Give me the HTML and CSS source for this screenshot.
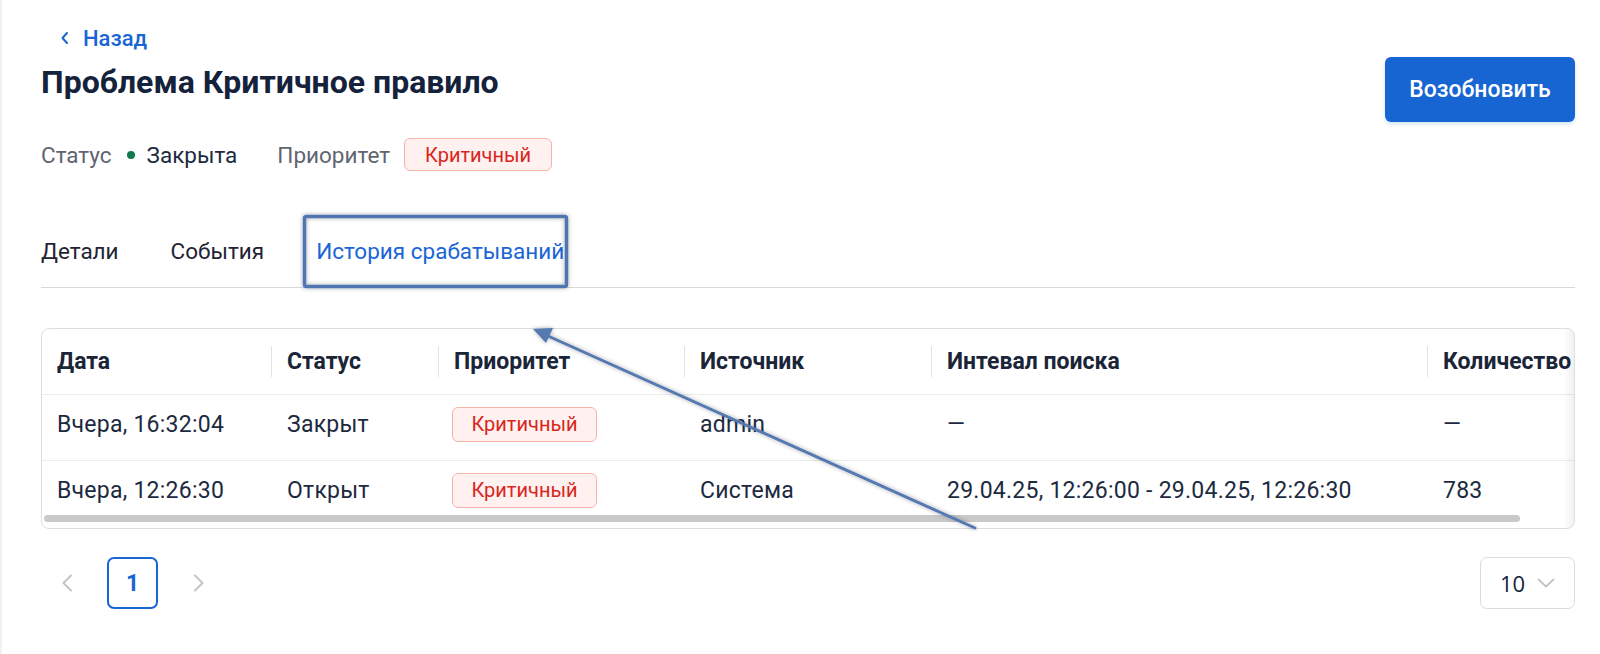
FILE: index.html
```html
<!DOCTYPE html>
<html lang="ru">
<head>
<meta charset="utf-8">
<title>Проблема Критичное правило</title>
<link rel="stylesheet" href="styles.css">
</head>
<body>
<div class="page">
  <header class="head">
    <div class="head-left">
      <a class="back" href="#">
        <svg class="back-icon" width="10" height="14" viewBox="0 0 10 14"><path d="M7 2 L2.5 7 L7 12" fill="none" stroke="currentColor" stroke-width="2" stroke-linecap="round" stroke-linejoin="round"/></svg>
        <span>Назад</span>
      </a>
      <h1 class="title">Проблема Критичное правило</h1>
      <div class="meta">
        <span class="meta-label">Статус</span>
        <span class="dot"></span>
        <span class="meta-value">Закрыта</span>
        <span class="meta-label meta-gap">Приоритет</span>
        <span class="badge">Критичный</span>
      </div>
    </div>
    <button class="btn-primary">Возобновить</button>
  </header>

  <nav class="tabs">
    <a class="tab" href="#">Детали</a>
    <a class="tab" href="#">События</a>
    <a class="tab tab-active" href="#">История срабатываний</a>
  </nav>

  <div class="card">
    <table class="grid">
      <colgroup>
        <col class="c1"><col class="c2"><col class="c3"><col class="c4"><col class="c5"><col class="c6">
      </colgroup>
      <thead>
        <tr>
          <th class="sep">Дата</th>
          <th class="sep">Статус</th>
          <th class="sep">Приоритет</th>
          <th class="sep">Источник</th>
          <th class="sep">Интевал поиска</th>
          <th>Количество</th>
        </tr>
      </thead>
      <tbody>
        <tr>
          <td>Вчера, 16:32:04</td>
          <td>Закрыт</td>
          <td class="td-badge"><span class="badge badge-row">Критичный</span></td>
          <td>admin</td>
          <td>—</td>
          <td>—</td>
        </tr>
        <tr>
          <td>Вчера, 12:26:30</td>
          <td>Открыт</td>
          <td class="td-badge"><span class="badge badge-row">Критичный</span></td>
          <td>Система</td>
          <td>29.04.25, 12:26:00 - 29.04.25, 12:26:30</td>
          <td>783</td>
        </tr>
      </tbody>
    </table>
    <div class="scroll-thumb"></div>
    <div class="edge-shade"></div>
  </div>

  <div class="pager">
    <div class="pages">
      <button class="pg-arrow" aria-label="Назад">
        <svg width="12" height="18" viewBox="0 0 12 18"><path d="M10 1.5 L2.5 9 L10 16.5" fill="none" stroke="currentColor" stroke-width="2" stroke-linecap="round" stroke-linejoin="round"/></svg>
      </button>
      <button class="pg-num">1</button>
      <button class="pg-arrow" aria-label="Вперёд">
        <svg width="12" height="18" viewBox="0 0 12 18"><path d="M2 1.5 L9.5 9 L2 16.5" fill="none" stroke="currentColor" stroke-width="2" stroke-linecap="round" stroke-linejoin="round"/></svg>
      </button>
    </div>
    <div class="size-select">
      <span>10</span>
      <svg width="18" height="10" viewBox="0 0 18 10"><path d="M1.5 1.5 L9 8.5 L16.5 1.5" fill="none" stroke="currentColor" stroke-width="1.8" stroke-linecap="round" stroke-linejoin="round"/></svg>
    </div>
  </div>
</div>

<svg class="annotation" width="1600" height="654" viewBox="0 0 1600 654">
  <defs>
    <filter id="sh" x="-10%" y="-10%" width="120%" height="120%">
      <feDropShadow dx="0" dy="0" stdDeviation="2" flood-color="#000" flood-opacity="0.35"/>
    </filter>
  </defs>
  <rect x="304.5" y="216.5" width="262" height="70" rx="2" fill="none" stroke="#4f76b0" stroke-width="3.5" filter="url(#sh)"/>
  <g filter="url(#sh)">
    <line x1="975" y1="528" x2="548" y2="336" stroke="#5579b0" stroke-width="3" stroke-linecap="round"/>
    <path d="M533 329 L553 328 L546 343 Z" fill="#5579b0"/>
  </g>
</svg>
</body>
</html>
```

FILE: styles.css
```css
* { box-sizing: border-box; }

html, body {
  margin: 0;
  background: #ffffff;
}

body {
  font-family: Roboto, "Noto Sans", "Liberation Sans", sans-serif;
  color: #1c2a40;
  width: 1600px;
  height: 654px;
  overflow: hidden;
  position: relative;
  border-left: 2px solid #f1f1f1;
}

.page {
  padding: 24px 25px 0 39px;
}

.head {
  display: flex;
  justify-content: space-between;
  align-items: flex-start;
}

.head-left {
  display: flex;
  flex-direction: column;
}

.back {
  display: flex;
  align-items: center;
  gap: 13px;
  height: 28px;
  padding-left: 19px;
  color: #1a65d6;
  text-decoration: none;
  font-size: 22px;
  font-weight: 500;
}

.back-icon { display: block; }

.title {
  margin: 10px 0 0;
  font-size: 32px;
  line-height: 40px;
  font-weight: 700;
  color: #14223b;
}

.meta {
  margin-top: 36px;
  display: flex;
  align-items: center;
  height: 33px;
  font-size: 22.5px;
}

.meta-label { color: #5f6470; }
.meta-gap { margin-left: 40px; margin-right: 14px; }

.dot {
  width: 8px;
  height: 8px;
  border-radius: 50%;
  background: #0e7a4d;
  margin: 0 12px 0 15px;
}

.meta-value { color: #1c2a40; }

.badge {
  display: inline-flex;
  align-items: center;
  justify-content: center;
  height: 33px;
  padding: 0 20px;
  border: 1px solid #f6b3ac;
  border-radius: 6px;
  background: #fff1f0;
  color: #d8261c;
  font-size: 20px;
}

.badge-row {
  height: 35px;
  width: 145px;
  padding: 0;
}

.btn-primary {
  margin-top: 33px;
  width: 190px;
  height: 65px;
  border: none;
  border-radius: 6px;
  background: #1765d3;
  color: #ffffff;
  font-family: Roboto, "Noto Sans", sans-serif;
  font-size: 23px;
  font-weight: 500;
  box-shadow: 0 2px 4px rgba(23, 101, 211, 0.18);
}

.tabs {
  margin-top: 42px;
  display: flex;
  gap: 52px;
  border-bottom: 1px solid #d9d9d9;
}

.tab {
  padding: 24px 0 22px;
  line-height: 28px;
  font-size: 22.5px;
  color: #1f2433;
  text-decoration: none;
}

.tab-active { color: #1a65d6; }

.card {
  position: relative;
  margin-top: 40px;
  height: 201px;
  border: 1px solid #dedede;
  border-radius: 8px;
  overflow: hidden;
}

.grid {
  table-layout: fixed;
  border-collapse: collapse;
  width: 1566px;
  font-size: 23px;
}

.c1 { width: 230px; }
.c2 { width: 167px; }
.c3 { width: 246px; }
.c4 { width: 247px; }
.c5 { width: 496px; }
.c6 { width: 180px; }

.grid th {
  position: relative;
  height: 65px;
  padding: 0 15px;
  text-align: left;
  font-weight: 700;
  color: #1b2538;
  border-bottom: 1px solid #ececec;
  white-space: nowrap;
}

.grid th.sep::after {
  content: "";
  position: absolute;
  right: 0;
  top: 17px;
  width: 1px;
  height: 31px;
  background: #e3e3e3;
}

.grid td {
  height: 66px;
  padding: 0 15px 6px;
  color: #1c2a40;
  white-space: nowrap;
  letter-spacing: 0.25px;
  border-bottom: 1px solid #ececec;
  vertical-align: middle;
}

.grid td.td-badge { padding-left: 13px; letter-spacing: 0; }

.grid tbody tr:last-child td { border-bottom: none; }

.scroll-thumb {
  position: absolute;
  left: 2px;
  top: 186px;
  width: 1476px;
  height: 7px;
  border-radius: 4px;
  background: #c9c9c9;
}

.edge-shade {
  position: absolute;
  right: 0;
  top: 0;
  width: 10px;
  height: 100%;
  background: linear-gradient(to right, rgba(0,0,0,0), rgba(0,0,0,0.06));
}

.pager {
  margin-top: 28px;
  display: flex;
  justify-content: space-between;
  align-items: center;
}

.pages {
  display: flex;
  gap: 15px;
  padding-left: 0;
}

.pg-arrow {
  width: 51px;
  height: 52px;
  border: none;
  background: none;
  color: #c4c4c4;
  display: flex;
  align-items: center;
  justify-content: center;
  padding: 0;
}

.pg-num {
  width: 51px;
  height: 52px;
  border: 2px solid #1a65d6;
  border-radius: 7px;
  background: #ffffff;
  color: #1a65d6;
  font-family: Roboto, "Noto Sans", sans-serif;
  font-size: 23px;
  font-weight: 700;
  padding: 0;
}

.size-select {
  width: 95px;
  height: 52px;
  border: 1px solid #dcdcdc;
  border-radius: 7px;
  display: flex;
  align-items: center;
  padding-left: 19px;
  gap: 12px;
  font-family: "Open Sans", "Noto Sans", sans-serif;
  font-size: 22px;
  color: #14223b;
}

.size-select svg { color: #c2c2c2; }

.annotation {
  position: absolute;
  left: -2px;
  top: 0;
  pointer-events: none;
}
```
